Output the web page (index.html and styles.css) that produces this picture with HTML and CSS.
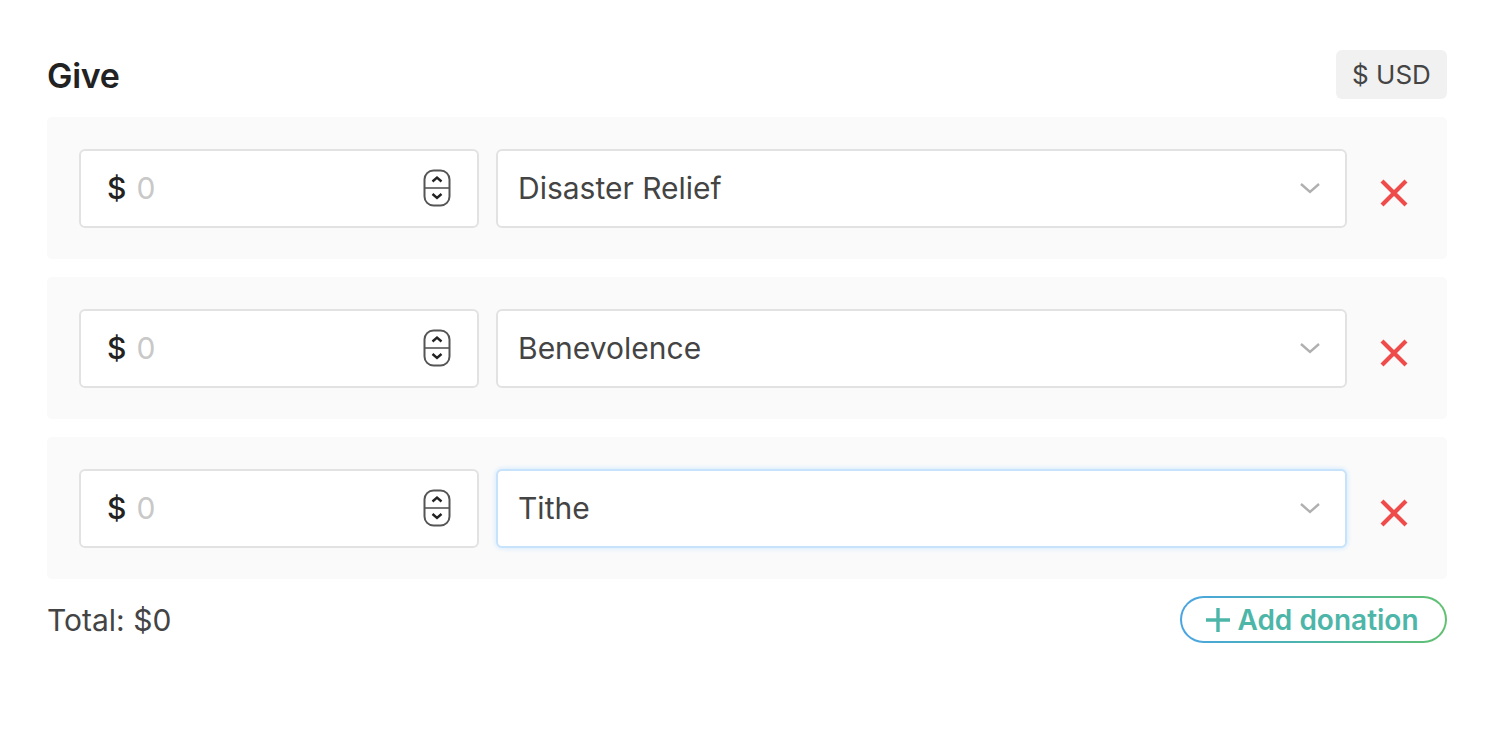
FILE: index.html
```html
<!DOCTYPE html>
<html>
<head>
<meta charset="utf-8">
<link rel="stylesheet" href="styles.css">
</head>
<body>
<div class="give">
  <div class="head">
    <h1 class="title">Give</h1>
    <div class="currency">$ USD</div>
  </div>
  <div class="rows">
    <div class="row">
      <div class="amount">
        <span class="cur">$</span><span class="ph">0</span>
        <svg class="stepper" width="28" height="38" viewBox="0 0 28 38"><rect x="1.5" y="1.5" width="25" height="35" rx="9" fill="none" stroke="#555" stroke-width="2"/><line x1="1.5" y1="19" x2="26.5" y2="19" stroke="#555" stroke-width="1.6"/><path d="M9.5 12.5 L14 8.5 L18.5 12.5" fill="none" stroke="#222" stroke-width="2.4"/><path d="M9.5 25 L14 29 L18.5 25" fill="none" stroke="#222" stroke-width="2.4"/></svg>
      </div>
      <div class="select"><span>Disaster Relief</span>
        <svg class="chev" width="22" height="14" viewBox="0 0 22 14"><path d="M2 3 L11 11 L20 3" fill="none" stroke="#b0b0b0" stroke-width="2.4"/></svg>
      </div>
      <div class="remove"><svg width="30" height="30" viewBox="0 0 30 30"><path d="M3 3 L27 27 M27 3 L3 27" stroke="#ef4b4b" stroke-width="4.2"/></svg></div>
    </div>
    <div class="row">
      <div class="amount">
        <span class="cur">$</span><span class="ph">0</span>
        <svg class="stepper" width="28" height="38" viewBox="0 0 28 38"><rect x="1.5" y="1.5" width="25" height="35" rx="9" fill="none" stroke="#555" stroke-width="2"/><line x1="1.5" y1="19" x2="26.5" y2="19" stroke="#555" stroke-width="1.6"/><path d="M9.5 12.5 L14 8.5 L18.5 12.5" fill="none" stroke="#222" stroke-width="2.4"/><path d="M9.5 25 L14 29 L18.5 25" fill="none" stroke="#222" stroke-width="2.4"/></svg>
      </div>
      <div class="select"><span>Benevolence</span>
        <svg class="chev" width="22" height="14" viewBox="0 0 22 14"><path d="M2 3 L11 11 L20 3" fill="none" stroke="#b0b0b0" stroke-width="2.4"/></svg>
      </div>
      <div class="remove"><svg width="30" height="30" viewBox="0 0 30 30"><path d="M3 3 L27 27 M27 3 L3 27" stroke="#ef4b4b" stroke-width="4.2"/></svg></div>
    </div>
    <div class="row">
      <div class="amount">
        <span class="cur">$</span><span class="ph">0</span>
        <svg class="stepper" width="28" height="38" viewBox="0 0 28 38"><rect x="1.5" y="1.5" width="25" height="35" rx="9" fill="none" stroke="#555" stroke-width="2"/><line x1="1.5" y1="19" x2="26.5" y2="19" stroke="#555" stroke-width="1.6"/><path d="M9.5 12.5 L14 8.5 L18.5 12.5" fill="none" stroke="#222" stroke-width="2.4"/><path d="M9.5 25 L14 29 L18.5 25" fill="none" stroke="#222" stroke-width="2.4"/></svg>
      </div>
      <div class="select focused"><span>Tithe</span>
        <svg class="chev" width="22" height="14" viewBox="0 0 22 14"><path d="M2 3 L11 11 L20 3" fill="none" stroke="#b0b0b0" stroke-width="2.4"/></svg>
      </div>
      <div class="remove"><svg width="30" height="30" viewBox="0 0 30 30"><path d="M3 3 L27 27 M27 3 L3 27" stroke="#ef4b4b" stroke-width="4.2"/></svg></div>
    </div>
  </div>
  <div class="foot">
    <div class="total">Total: $0</div>
    <div class="add"><div class="add-inner"><svg width="28" height="28" viewBox="0 0 28 28"><path d="M14 2 V26 M2 14 H26" stroke="#4db6a8" stroke-width="3.4"/></svg><span>Add donation</span></div></div>
  </div>
</div>
</body>
</html>
```
FILE: styles.css
```css
* { box-sizing: border-box; }
body {
  margin: 0;
  background: #fff;
  font-family: Inter, "Noto Sans", "Liberation Sans", sans-serif;
  color: #333;
}
.give {
  width: 1400px;
  margin-left: 47px;
  padding-top: 50px;
}
.head {
  display: flex;
  justify-content: space-between;
  align-items: center;
  height: 49px;
}
.title {
  margin: 0;
  font-size: 34px;
  font-weight: 600;
  color: #222;
  letter-spacing: -0.3px;
  padding-top: 2px;
}
.currency {
  background: #f1f1f1;
  border-radius: 6px;
  height: 49px;
  width: 111px;
  display: flex;
  align-items: center;
  justify-content: center;
  font-size: 26px;
  color: #444;
}
.rows {
  margin-top: 18px;
  display: flex;
  flex-direction: column;
  gap: 18px;
}
.row {
  background: #fafafa;
  border-radius: 5px;
  height: 142px;
  display: flex;
  align-items: center;
  padding-left: 32px;
}
.amount {
  width: 400px;
  height: 79px;
  background: #fff;
  border: 2px solid #e2e2e2;
  border-radius: 6px;
  display: flex;
  align-items: center;
  padding-left: 26px;
  padding-right: 26px;
  font-size: 30px;
}
.cur { color: #222; font-weight: 500; }
.ph { color: #c8c8c8; margin-left: 10px; flex: 1; }
.stepper { display: block; }
.select {
  margin-left: 17px;
  width: 851px;
  height: 79px;
  background: #fff;
  border: 2px solid #e2e2e2;
  border-radius: 6px;
  display: flex;
  align-items: center;
  justify-content: space-between;
  padding-left: 20px;
  padding-right: 24px;
  font-size: 30px;
  color: #444;
}
.select.focused {
  border-color: #c7e2fb;
  box-shadow: 0 0 4px 1px #d9ecfd;
}
.chev { display: block; }
.remove {
  flex: 1;
  display: flex;
  justify-content: center;
  padding-top: 10px;
  padding-right: 6px;
}
.remove svg { display: block; }
.foot {
  margin-top: 17px;
  display: flex;
  justify-content: space-between;
  align-items: center;
}
.total {
  font-size: 30px;
  color: #444;
}
.add {
  width: 267px;
  height: 47px;
  border-radius: 24px;
  padding: 2px;
  background: linear-gradient(90deg, #4aa4e2, #4db6a8 50%, #62c070);
}
.add-inner {
  height: 100%;
  border-radius: 22px;
  background: #fff;
  display: flex;
  align-items: center;
  justify-content: center;
  gap: 5px;
  font-size: 28px;
  font-weight: 600;
  color: #4db6a8;
  padding-right: 4px;
}
.add-inner svg { display: block; }
```
